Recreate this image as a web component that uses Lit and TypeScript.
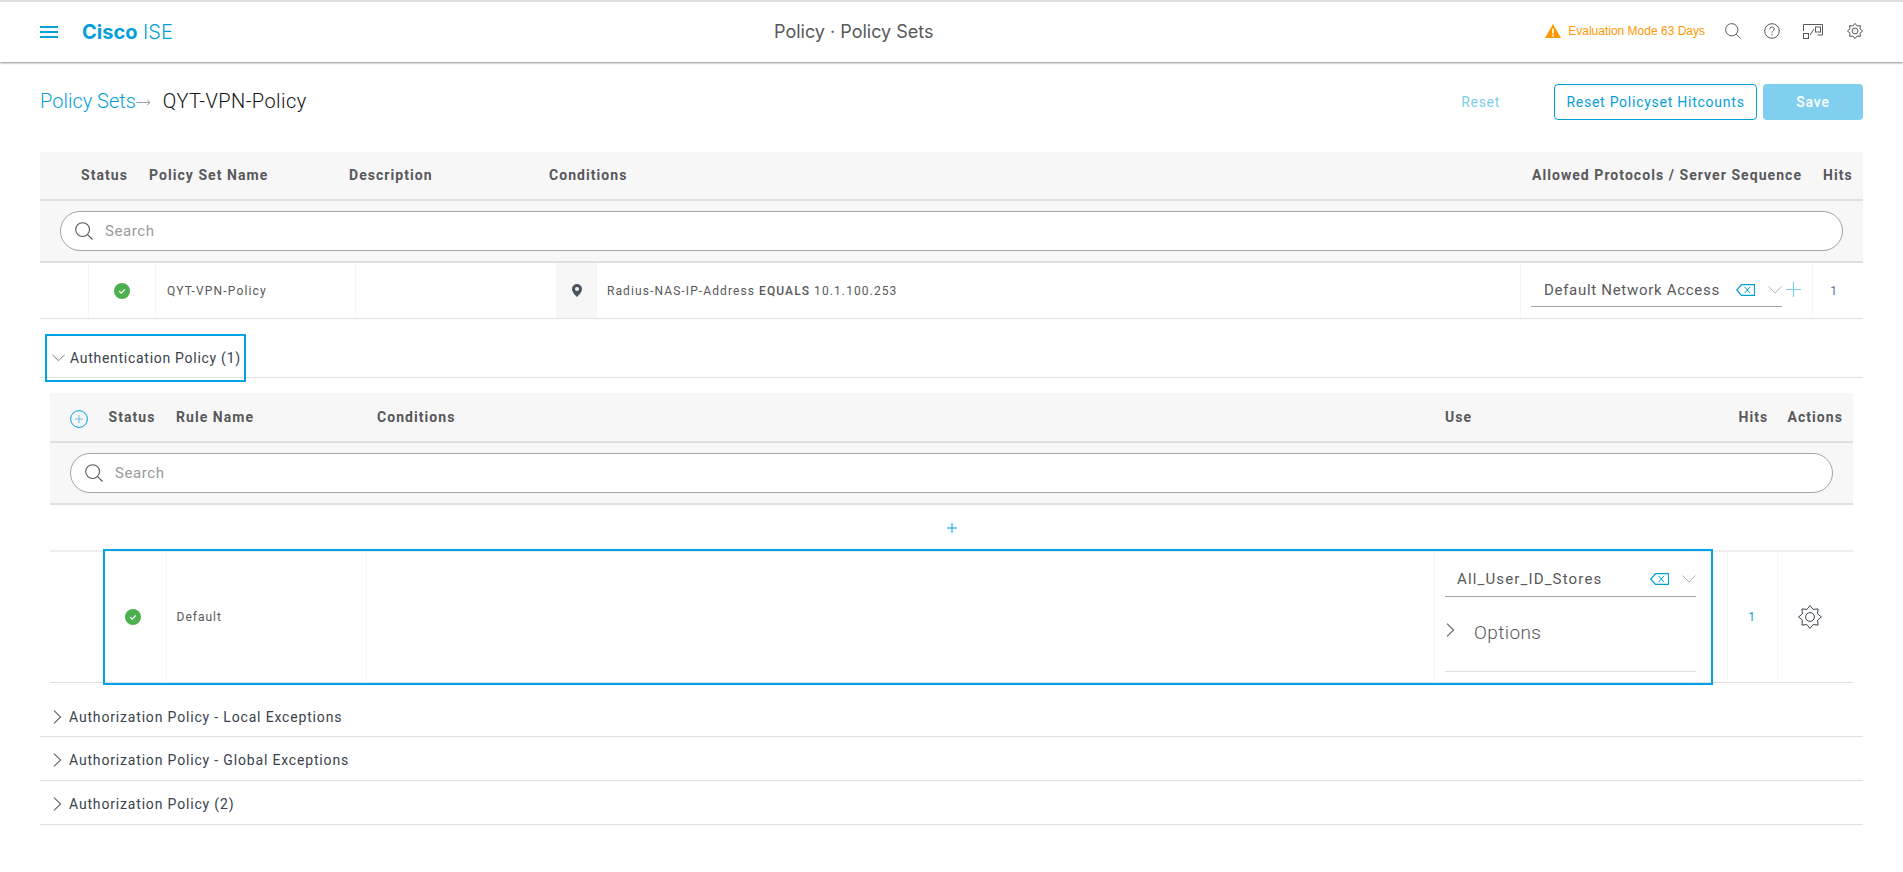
import { LitElement, html, css, svg } from 'lit'
import { customElement } from 'lit/decorators.js'

const chevDown = (w = 14, c = '#b3b8bd') => html`<svg width=${w} height="8" viewBox="0 0 14 8" fill="none" stroke=${c} stroke-width="1"><path d="M.5.5 7 7 13.5.5"/></svg>`
const chevRight = html`<svg width="9" height="14" viewBox="0 0 9 14" fill="none" stroke="#5b6570" stroke-width="1.1"><path d="M1 .7 7.6 7 1 13.3"/></svg>`
const search = (s = 18, c = '#58585b') => html`<svg width=${s} height=${s} viewBox="0 0 18 18" fill="none" stroke=${c} stroke-width="1.1"><circle cx="7.6" cy="7.6" r="6.9"/><path d="m12.6 12.6 4.9 4.9"/></svg>`
const check = html`<svg width="16" height="16" viewBox="0 0 16 16"><circle cx="8" cy="8" r="8" fill="#4caf50"/><path d="m5.2 8.2 2 2 3.6-3.8" fill="none" stroke="#fff" stroke-width="1.2"/></svg>`
const backspace = html`<svg width="19" height="12" viewBox="0 0 19 12" fill="none" stroke="#049fd9" stroke-width="1.2"><path d="M5.5.6h13v10.8h-13L.8 6z"/><path d="m8.5 2.8 5.5 6.4M14 2.8 8.5 9.2" stroke-width="1"/></svg>`

// eight rounded teeth round the centre, the reference gear is more star than cog
const gearOutline = () => {
  const pts: string[] = []
  for (let i = 0; i < 16; i++) {
    const r = i % 2 === 0 ? 11.4 : 8.2
    const a = (i * Math.PI) / 8 - Math.PI / 2
    pts.push(`${(12 + r * Math.cos(a)).toFixed(2)},${(12 + r * Math.sin(a)).toFixed(2)}`)
  }
  return pts.join(' ')
}
const gearPath = svg`<polygon points=${gearOutline()} stroke-linejoin="round"/><circle cx="12" cy="12" r="4.4"/>`

@customElement('app-root')
export class AppRoot extends LitElement {
  static styles = css`
    :host {
      display: block;
      position: relative;
      width: 1903px;
      height: 872px;
      overflow: hidden;
      background: #fff;
      font-family: Roboto, "Liberation Sans", sans-serif;
      color: #39424c;
    }
    .topbar {
      display: flex;
      align-items: center;
      height: 58px;
      padding: 0 40px 2px;
      border-top: 2px solid #dfdfdf;
      box-shadow: 0 1px 2px rgba(0, 0, 0, 0.45);
    }
    .brand { display: flex; align-items: center; width: 734px; flex: none; }
    .burger { width: 18px; height: 12px; border-top: 2px solid #049fd9; border-bottom: 2px solid #049fd9; position: relative; margin: 1px 24px 0 0; box-sizing: border-box; }
    .burger::after { content: ""; position: absolute; left: 0; right: 0; top: 3px; height: 2px; background: #049fd9; }
    .logo { font-family: Inter, sans-serif; font-size: 20px; color: #049fd9; font-weight: 300; margin-top: 1px; }
    .logo b { font-weight: 700; }
    .title { font-family: Inter, sans-serif; font-size: 18px; color: #58585b; }
    .tools { margin-left: auto; display: flex; align-items: center; color: #58585b; }
    .eval { display: flex; align-items: center; gap: 7px; color: #ff9900; font-family: "Liberation Sans", sans-serif; font-size: 12px; margin-right: 20px; }
    .tools svg { display: block; }
    .gap-a { margin-right: 23px; }
    .gap-b { margin-right: 24px; }
    .crumbbar { display: flex; align-items: center; height: 80px; padding: 0 40px 10px; }
    .crumb { font-size: 20px; color: #049fd9; font-weight: 300; margin-top: -2px; }
    .arrow { margin: 0 12px 0 0; display: block; }
    .current { font-size: 20px; color: #111; font-weight: 300; letter-spacing: 0.45px; margin-top: -2px; }
    .reset { margin-left: auto; margin-right: 54px; font-size: 14px; color: #7fcdec; letter-spacing: 0.7px; }
    .outline, .save {
      display: flex; align-items: center; justify-content: center;
      height: 36px; box-sizing: border-box; border-radius: 4px; font-size: 14px; letter-spacing: 0.75px;
    }
    .outline { width: 203px; border: 1px solid #049fd9; color: #049fd9; margin-right: 6px; }
    .save { width: 100px; background: #80cfee; color: #fff; font-weight: 500; }
    .table { margin: 0 40px; }
    .head {
      display: grid;
      align-items: center;
      background: #f7f7f7;
      border-bottom: 2px solid #dfdfdf;
      font-size: 14px;
      font-weight: 700;
      color: #58585b;
      letter-spacing: 1.05px;
    }
    .set-head { height: 46px; padding-bottom: 1px; grid-template-columns: 41px 68px 200px 200px 983px 291px 1fr; }
    .rule-head { height: 48px; grid-template-columns: 58.5px 67.5px 201px 1068px 293.5px 49px 1fr; }
    .add-cell { display: flex; padding: 4px 0 0 20px; }
    .searchrow { background: #f7f7f7; border-bottom: 2px solid #dfdfdf; height: 60px; display: flex; align-items: center; padding: 0 20px; }
    .pill {
      flex: 1; height: 40px; box-sizing: border-box; background: #fff;
      border: 1px solid #a3a3a3; border-radius: 20px; display: flex; align-items: center; gap: 12px; padding: 0 14px 1px;
      color: #9a9a9a; font-size: 15px; letter-spacing: 0.6px;
    }
    .row { display: grid; align-items: stretch; font-size: 12px; letter-spacing: 1px; color: #58585b; }
    .row > div { display: flex; align-items: center; border-right: 1px solid #f6f6f6; min-width: 0; }
    .row > div:last-child { border-right: 0; }
    .set-row { height: 55px; border-bottom: 1px solid #dfdfdf; grid-template-columns: 49px 67px 200px 201px 40px 924px 292px 1fr; }
    .center { justify-content: center; }
    .name { padding-left: 11px; letter-spacing: 1.15px; }
    .pin { background: #f7f7f7; }
    .cond { padding-left: 10px; white-space: pre; letter-spacing: 1.1px; }
    .cond b { font-weight: 500; margin: 0 4px; }
    .use { flex-direction: column; align-items: stretch !important; padding: 0 0 0 10px; box-sizing: border-box; }
    .field { display: flex; align-items: center; width: 251px; height: 36px; box-sizing: border-box; border-bottom: 1px solid #a3a3a3; font-size: 15px; padding-left: 12px; letter-spacing: 1.15px; color: #58585b; }
    .field svg:first-of-type { margin-left: auto; margin-right: 13px; }
    .set-use { flex-direction: row; align-items: flex-start !important; padding-top: 8px; }
    .set-use .field { padding: 2px 0 0 13px; letter-spacing: 0.7px; }
    .plus-set { margin-left: 4px; margin-top: 11px; }
    .hit { color: #5a6fa0; padding-right: 8px; }
    .section {
      display: flex; align-items: center; gap: 7px; height: 40px; padding: 3px 0 0 13px;
      border-bottom: 1px solid #dfdfdf; margin: 0 40px;
      font-size: 14px; letter-spacing: 0.83px; color: #39424c;
    }
    .section.open { margin-top: 15px; height: 39px; padding: 4px 0 0 12px; gap: 5px; letter-spacing: 0.72px; }
    .rules { margin: 15px 50px 0; }
    .addrow { height: 44px; border-bottom: 2px solid #eee; display: flex; align-items: center; justify-content: center; padding-top: 1px; }
    .rule-row { height: 130px; border-bottom: 1px solid #dfdfdf; grid-template-columns: 53px 63.5px 200px 1068px 293px 50px 1fr; }
    .rule-status { padding-right: 3px; }
    .rule-name { padding-left: 10px; }
    .use-rule { padding: 9px 0 0 10.5px; justify-content: flex-start; }
    .options { display: flex; align-items: center; gap: 19px; width: 251px; height: 75px; padding: 0 0 4px 1px; box-sizing: border-box; border-bottom: 1px solid #dfdfdf; font-size: 19px; letter-spacing: 0.4px; color: #58585b; font-weight: 300; }
    .options svg { margin-top: -5px; }
    .rule-hit { color: #049fd9; }
    .gear-cell { padding-right: 10px; }
    .after { margin-top: 11px; height: 39px; }
    .mark { position: absolute; border: 2px solid #00a3e8; pointer-events: none; box-sizing: border-box; }
    .mark-a { left: 45px; top: 334px; width: 201px; height: 48px; }
    .mark-b { left: 103px; top: 549px; width: 1610px; height: 136px; }
  `

  render() {
    return html`
      <div class="topbar">
        <div class="brand">
          <div class="burger"></div>
          <div class="logo"><b>Cisco</b> ISE</div>
        </div>
        <div class="title">Policy · Policy Sets</div>
        <div class="tools">
          <div class="eval">
            <svg width="16" height="14" viewBox="0 0 16 14"><path d="M8 0 16 14H0z" fill="#ff9900"/><path d="M8 4.5v5M8 10.6v1.8" stroke="#fff" stroke-width="1.6"/></svg>
            Evaluation Mode 63 Days
          </div>
          <div class="gap-a">${search(16, '#58585b')}</div>
          <div class="gap-a">
            <svg width="16" height="16" viewBox="0 0 16 16" fill="none" stroke="#58585b"><circle cx="8" cy="8" r="7.3"/><path d="M5.8 6.2C5.8 4.8 6.8 4 8 4s2.2.8 2.2 2.1c0 1.7-2.2 1.8-2.2 3.6M8 11v1.4"/></svg>
          </div>
          <div class="gap-b">
            <svg width="20" height="15" viewBox="0 0 20 15" fill="none" stroke="#58585b"><path d="M.5 7V.5h19v10.5h-5"/><rect x="12.5" y="3" width="5" height="5"/><rect x=".5" y="9.5" width="5" height="5"/><path d="m7 11 4-6"/></svg>
          </div>
          <svg width="16" height="16" viewBox="0 0 24 24" fill="none" stroke="#58585b" stroke-width="1.5">${gearPath}</svg>
        </div>
      </div>

      <div class="crumbbar">
        <span class="crumb">Policy Sets</span>
        <svg class="arrow" width="15" height="7" viewBox="0 0 15 7" fill="none" stroke="#9aa0a6"><path d="M0 3.5h14M11 .8l3 2.7-3 2.7"/></svg>
        <span class="current">QYT-VPN-Policy</span>
        <span class="reset">Reset</span>
        <div class="outline">Reset Policyset Hitcounts</div>
        <div class="save">Save</div>
      </div>

      <div class="table">
        <div class="head set-head">
          <span></span><span>Status</span><span>Policy Set Name</span><span>Description</span>
          <span>Conditions</span><span>Allowed Protocols / Server Sequence</span><span>Hits</span>
        </div>
        <div class="searchrow"><div class="pill">${search(18)}Search</div></div>
        <div class="row set-row">
          <div></div>
          <div class="center">${check}</div>
          <div class="name">QYT-VPN-Policy</div>
          <div></div>
          <div class="pin center">
            <svg width="10" height="13" viewBox="0 0 10 13"><path fill-rule="evenodd" fill="#4a5560" d="M5 0a5 5 0 0 1 5 5c0 3-3 6-5 8-2-2-5-5-5-8a5 5 0 0 1 5-5zm0 3a2 2 0 1 0 0 4 2 2 0 0 0 0-4z"/></svg>
          </div>
          <div class="cond">Radius-NAS-IP-Address<b>EQUALS</b>10.1.100.253</div>
          <div class="use set-use">
            <div class="field">Default Network Access ${backspace} ${chevDown()}</div>
            <svg class="plus-set" width="15" height="15" viewBox="0 0 15 15" stroke="#7fcdec" stroke-width="1.2"><path d="M7.5 0v15M0 7.5h15"/></svg>
          </div>
          <div class="center hit">1</div>
        </div>
      </div>

      <div class="section open">${chevDown(13, '#6b747d')}<span>Authentication Policy (1)</span></div>

      <div class="rules">
        <div class="head rule-head">
          <span class="add-cell">
            <svg width="18" height="18" viewBox="0 0 18 18" fill="none" stroke="#049fd9"><circle cx="9" cy="9" r="8.4"/><path d="M9 5v8M5 9h8" stroke="#6fb9dc"/></svg>
          </span>
          <span>Status</span><span>Rule Name</span><span>Conditions</span><span>Use</span><span>Hits</span><span>Actions</span>
        </div>
        <div class="searchrow"><div class="pill">${search(18)}Search</div></div>
        <div class="addrow">
          <svg width="10" height="10" viewBox="0 0 10 10" stroke="#049fd9"><path d="M5 0v10M0 5h10"/></svg>
        </div>
        <div class="row rule-row">
          <div></div>
          <div class="center rule-status">${check}</div>
          <div class="rule-name">Default</div>
          <div></div>
          <div class="use use-rule">
            <div class="field">All_User_ID_Stores ${backspace} ${chevDown()}</div>
            <div class="options">${chevRight}<span>Options</span></div>
          </div>
          <div class="center rule-hit">1</div>
          <div class="center gear-cell">
            <svg width="24" height="24" viewBox="0 0 24 24" fill="none" stroke="#39424c" stroke-width="1">${gearPath}</svg>
          </div>
        </div>
      </div>

      <div class="section after">${chevRight}<span>Authorization Policy - Local Exceptions</span></div>
      <div class="section">${chevRight}<span>Authorization Policy - Global Exceptions</span></div>
      <div class="section">${chevRight}<span>Authorization Policy (2)</span></div>

      <div class="mark mark-a"></div>
      <div class="mark mark-b"></div>
    `
  }
}
